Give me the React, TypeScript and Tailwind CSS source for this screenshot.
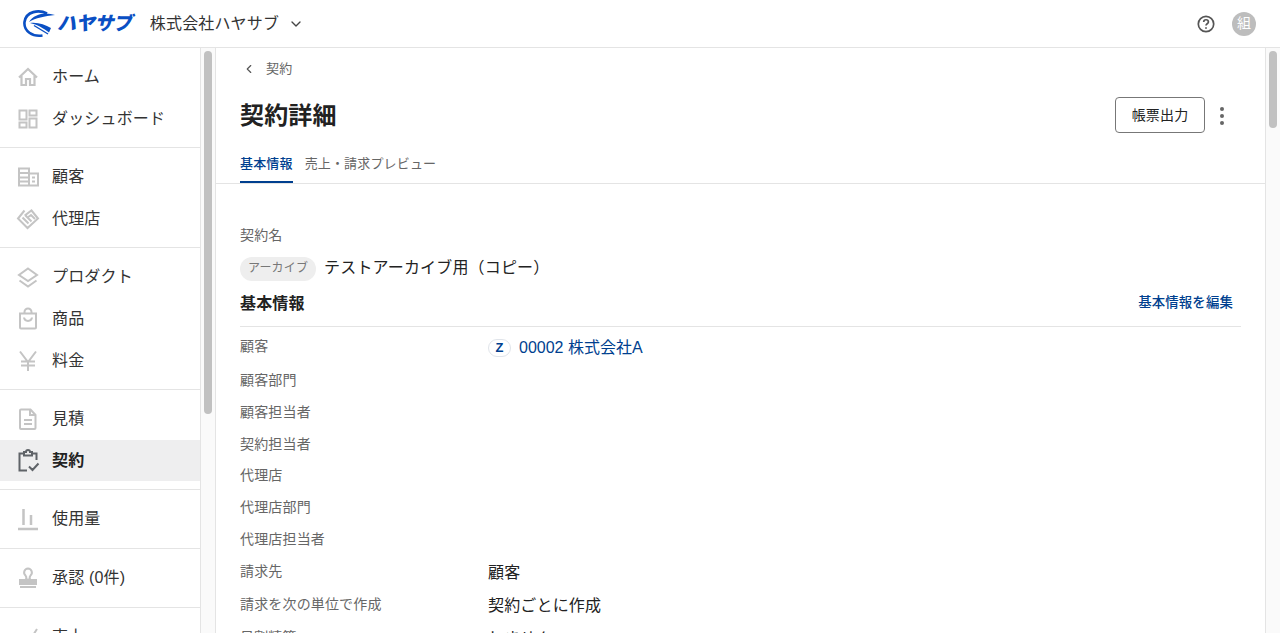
import { ChevronDown, ChevronLeft } from 'lucide-react'
import { type ReactNode } from 'react'

const FONT = { fontFamily: '"Liberation Sans", "Noto Sans CJK JP", sans-serif' }

const GRAY = '#c4c4c4'

function Icon({ children, color = GRAY }: { children: ReactNode; color?: string }) {
  return (
    <svg width="24" height="24" viewBox="0 0 24 24" fill="none" stroke={color} strokeWidth="2" className="shrink-0">
      {children}
    </svg>
  )
}

const HomeIcon = () => (
  <Icon>
    <path d="M3 12.500 12 4l9 8.500M5.500 11v9h4.500v-6h4v6h4.500v-9" strokeWidth="2.200" />
  </Icon>
)
const DashIcon = () => (
  <Icon>
    <path d="M3.500 3.500h7v9h-7zM13.500 3.500h7v5h-7zM13.500 11.500h7v9h-7zM3.500 15.500h7v5h-7z" />
  </Icon>
)
const CustomerIcon = () => (
  <Icon>
    <path d="M3 3.500h10v17H3zM13 8.500h9v12h-9M3 8h10M3 12.500h10M3 16.500h10M16 12.500h3M16 16.500h3" />
  </Icon>
)
const AgencyIcon = () => (
  <Icon>
    <path d="M8.500 3.500 2 11.500l9.500 9.500 10.500-9.500L15.500 3.500l-6 4.500 2 2.500 3.500-2.500 4 4M6.500 10.500l6 6M9 8l6.500 6.500" />
  </Icon>
)
const ProductIcon = () => (
  <Icon>
    <path d="m12 3.500 9 6.500-9 6-9-6zM3.500 15.500l8.500 6 8.500-6" />
  </Icon>
)
const BagIcon = () => (
  <Icon>
    <path d="M4 6.500h16v14a1 1 0 0 1-1 1H5a1 1 0 0 1-1-1zM8.500 6.500V5a3.500 3.500 0 0 1 7 0v1.500M8 10.500c.5 4.500 7.500 4.500 8 0" />
  </Icon>
)
const YenIcon = () => (
  <Icon>
    <path d="m4 2.500 8 10.500 8-10.500M12 13v9M5 12.500h14M5 16.500h14" />
  </Icon>
)
const DocIcon = () => (
  <Icon>
    <path d="M5 2.500h9.500l5 5.500v13a1 1 0 0 1-1 1H5a1 1 0 0 1-1-1V3.500a1 1 0 0 1 1-1zM14 2.500V8h5.500M8 13h8M8 17h8" />
  </Icon>
)
const ContractIcon = () => (
  <Icon color="#5f6368">
    <path d="M8 4.500H3.500v17H11M16 4.500h4.500V11M8 3h2a2 2 0 0 1 4 0h2v3.500H8zM13 17.500l3.500 3.500 6-6.500" />
  </Icon>
)
const UsageIcon = () => (
  <Icon>
    <path d="M7.500 2v16M15 8v10M2 22h20" strokeWidth="2.500" />
  </Icon>
)
const StampIcon = () => (
  <Icon>
    <path d="M12 2.500a4 4 0 0 0-2.500 7c1 1 1 2.500.5 4h4c-.5-1.500-.5-3 .5-4a4 4 0 0 0-2.500-7z" />
    <path d="M4 14h16v4H4z" fill={GRAY} />
    <path d="M4 21h16" />
  </Icon>
)
const SalesIcon = () => (
  <Icon>
    <path d="M3 20 9 10l5 5 7-11" />
  </Icon>
)

const NAV: { icon: ReactNode; label: string; active?: boolean }[][] = [
  [
    { icon: <HomeIcon />, label: 'ホーム' },
    { icon: <DashIcon />, label: 'ダッシュボード' },
  ],
  [
    { icon: <CustomerIcon />, label: '顧客' },
    { icon: <AgencyIcon />, label: '代理店' },
  ],
  [
    { icon: <ProductIcon />, label: 'プロダクト' },
    { icon: <BagIcon />, label: '商品' },
    { icon: <YenIcon />, label: '料金' },
  ],
  [
    { icon: <DocIcon />, label: '見積' },
    { icon: <ContractIcon />, label: '契約', active: true },
  ],
  [{ icon: <UsageIcon />, label: '使用量' }],
  [{ icon: <StampIcon />, label: '承認 (0件)' }],
  [{ icon: <SalesIcon />, label: '売上' }],
]

const ROWS = ['顧客部門', '顧客担当者', '契約担当者', '代理店', '代理店部門', '代理店担当者']

function Logo() {
  return (
    <div className="flex items-center">
      <svg width="34" height="30" viewBox="0 0 34 30" fill="none" className="shrink-0">
        <path d="M24 4.500C16 0.500 3 2 1.500 13c-1 9 8 15 18 13.500" stroke="#0a4fc4" strokeWidth="2.600" />
        <path d="M32 6C22 2.500 11 5 6 13c7-4.500 15-5.500 26-7z" fill="#0a4fc4" />
        <path d="M7 14c8-1 15 2 21 5l-2 4.500C21 19.500 14 15.500 7 14z" fill="#0a4fc4" />
        <path d="M11 16.500 25 25" stroke="#0a4fc4" strokeWidth="1.400" />
      </svg>
      <span className="text-[19px] leading-none font-black tracking-[-0.3px] text-[#0a4fc4] italic">ハヤサブ</span>
    </div>
  )
}

function Scrollbar({ top, height, left }: { top: number; height: number; left: number }) {
  return (
    <div className="w-[14px] shrink-0 bg-[#fafafa]">
      <div style={{ marginTop: top, marginLeft: left, height }} className="w-[8px] rounded-full bg-[#c1c1c1]" />
    </div>
  )
}

export default function App() {
  return (
    <div style={FONT} className="flex h-screen flex-col overflow-hidden bg-white tracking-[0.01em] text-[#222222] antialiased">
      <header className="flex h-[48px] shrink-0 items-center border-b border-[#e4e4e4] pr-6 pl-[23px]">
        <Logo />
        <span className="ml-[18px] text-[16px] text-[#333333]">株式会社ハヤサブ</span>
        <ChevronDown size={16} strokeWidth={2} className="ml-[9px] text-[#444444]" />
        <div className="ml-auto flex items-center gap-4">
          <svg width="20" height="20" viewBox="0 0 20 20" fill="none" stroke="#555555" strokeWidth="1.700">
            <circle cx="10" cy="10" r="7.700" />
            <path d="M7.700 8c0-3 4.700-3 4.700 0 0 1.800-2.400 1.800-2.400 3.600" />
            <circle cx="10" cy="14" r=".5" fill="#555555" strokeWidth="1" />
          </svg>
          <div className="flex h-6 w-6 items-center justify-center rounded-full bg-[#bdbdbd] text-[14px] text-white">組</div>
        </div>
      </header>

      <div className="flex min-h-0 flex-1">
        <nav className="w-[201px] shrink-0 overflow-hidden border-r border-[#e4e4e4]">
          {NAV.map((group, i) => (
            <div key={i} className="flex flex-col gap-px border-b border-[#e4e4e4] py-2">
              {group.map((item) => (
                <div
                  key={item.label}
                  className={`flex items-center gap-3 pl-4 text-[16px] ${group.length === 1 ? 'h-[42px]' : 'h-[41px]'} ${item.active ? 'bg-[#eeeeef] font-bold text-[#222222]' : 'text-[#333333]'}`}
                >
                  {item.icon}
                  <span>{item.label}</span>
                </div>
              ))}
            </div>
          ))}
        </nav>
        <Scrollbar top={3} height={363} left={3} />

        <main className="flex min-w-0 flex-1 flex-col overflow-hidden border-x border-[#e4e4e4]">
          <div className="shrink-0 border-b border-[#e4e4e4]">
            <div className="flex h-[42px] items-center gap-[10px] pl-[26px] text-[13px] text-[#666666]">
              <ChevronLeft size={14} strokeWidth={2} className="text-[#555555]" />
              <span>契約</span>
            </div>
            <div className="flex h-[50px] items-center pr-[41px] pl-6">
              <h1 className="pt-[2px] text-[24px] font-bold text-[#222222]">契約詳細</h1>
              <button className="ml-auto h-9 w-[90px] rounded-[4px] border border-[#777777] text-[14px] text-[#222222]">帳票出力</button>
              <div className="ml-[15px] flex flex-col gap-[3px] pt-[2px]">
                <span className="h-1 w-1 rounded-full bg-[#666666]" />
                <span className="h-1 w-1 rounded-full bg-[#666666]" />
                <span className="h-1 w-1 rounded-full bg-[#666666]" />
              </div>
            </div>
            <div className="flex h-[43px] items-end gap-3 pl-6 text-[13px]">
              <span className="flex h-[39px] items-center border-b-2 border-[#003f8f] pt-[2px] font-medium text-[#003f8f]">基本情報</span>
              <span className="flex h-[39px] items-center pt-[1px] text-[#666666]">売上・請求プレビュー</span>
            </div>
          </div>

          <div className="pt-[41px] pr-6 pl-6">
            <div className="text-[14px] leading-5 text-[#666666]">契約名</div>
            <div className="mt-[12px] flex items-center gap-2">
              <span className="flex h-6 items-center rounded-full bg-[#eeeeee] px-2 pb-[2px] text-[12px] text-[#777777]">アーカイブ</span>
              <span className="pb-[2px] text-[16px] leading-5 text-[#222222]">テストアーカイブ用（コピー）</span>
            </div>
            <div className="mt-[11px] flex h-[27px] items-start justify-between pr-[8px]">
              <h2 className="text-[16px] font-bold text-[#222222]">基本情報</h2>
              <a className="mt-[1px] text-[13.4px] font-medium text-[#003f8f]">基本情報を編集</a>
            </div>
            <div className="mt-[7px] border-t border-[#e4e4e4] pt-[9px]">
              <div className="flex h-[29px] items-start">
                <span className="w-[248px] text-[14px] leading-5 text-[#666666]">顧客</span>
                <div className="flex items-center gap-2">
                  <span className="flex h-[18px] w-[23px] items-center justify-center rounded-full border border-[#e0e4ea] text-[13px] font-bold text-[#003f8f]">Z</span>
                  <span className="text-[16px] leading-6 tracking-normal text-[#003f8f]">00002 株式会社A</span>
                </div>
              </div>
              {ROWS.map((label) => (
                <div key={label} className="flex h-[31.700px] items-center text-[14px] text-[#666666]">
                  {label}
                </div>
              ))}
              <div className="flex h-[33px] items-center">
                <span className="w-[248px] text-[14px] text-[#666666]">請求先</span>
                <span className="pt-[2px] text-[16px] text-[#222222]">顧客</span>
              </div>
              <div className="flex h-[33px] items-center">
                <span className="w-[248px] text-[14px] text-[#666666]">請求を次の単位で作成</span>
                <span className="pt-[2px] text-[16px] text-[#222222]">契約ごとに作成</span>
              </div>
              <div className="flex h-[33px] items-center">
                <span className="w-[248px] text-[14px] text-[#666666]">日割精算</span>
                <span className="pt-[2px] text-[16px] text-[#222222]">しません</span>
              </div>
            </div>
          </div>
        </main>
        <Scrollbar top={3} height={77} left={3} />
      </div>
    </div>
  )
}
